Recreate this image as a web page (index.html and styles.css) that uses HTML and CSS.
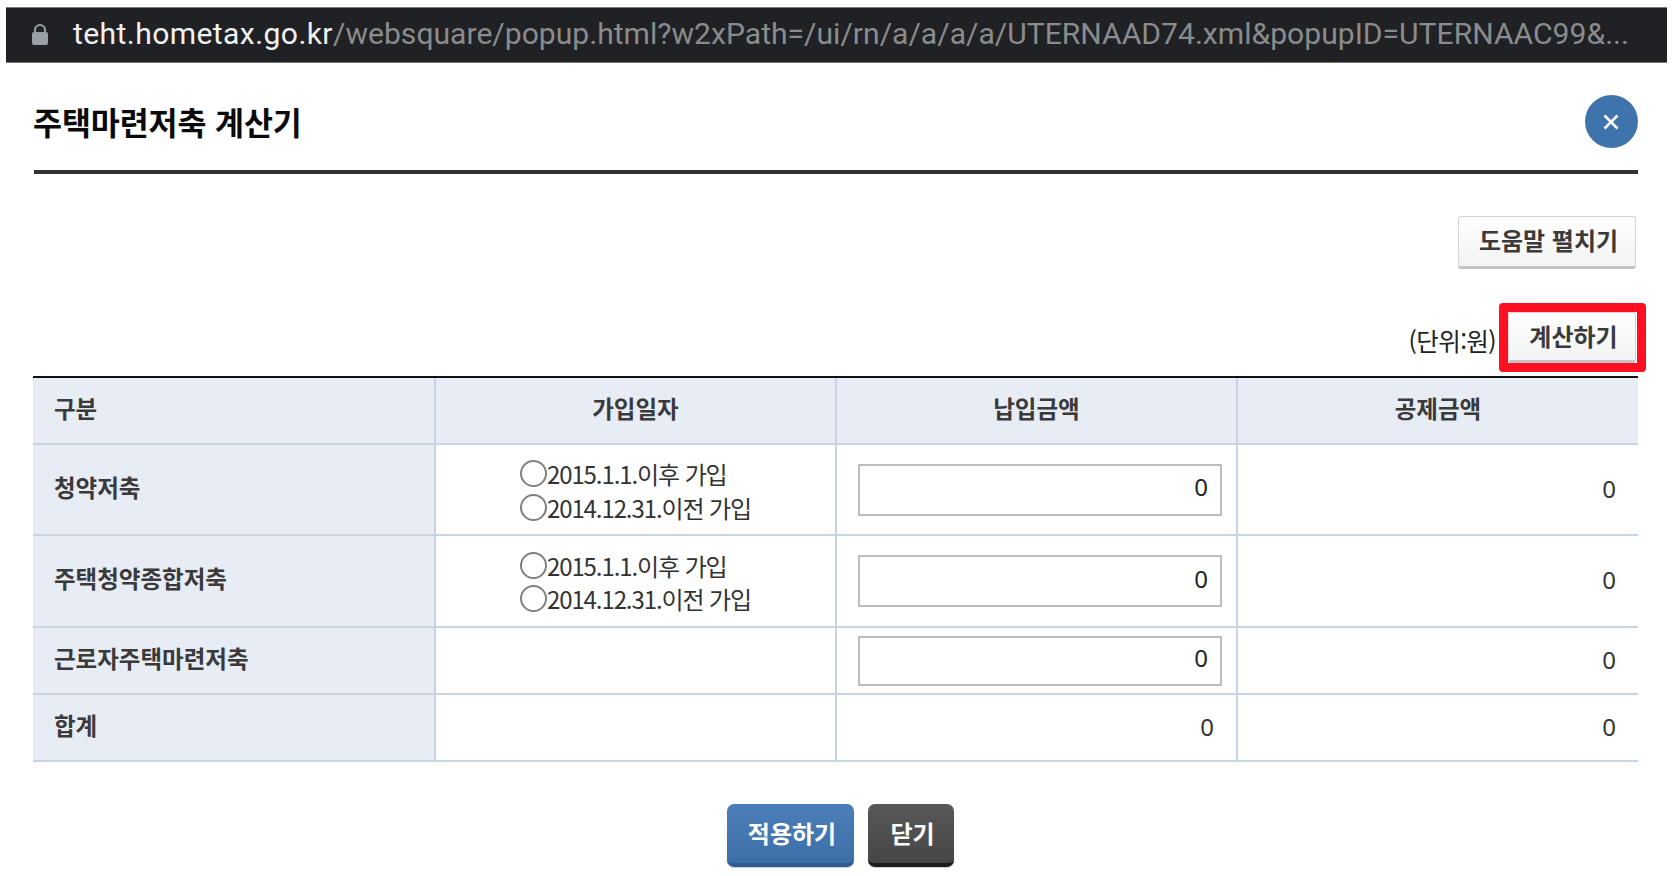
FILE: index.html
```html
<!DOCTYPE html>
<html lang="ko">
<head>
<meta charset="utf-8">
<title>주택마련저축 계산기</title>
<link rel="stylesheet" href="styles.css">
</head>
<body>
<div class="urlbar">
  <svg class="lock" viewBox="0 0 16 21" aria-hidden="true"><path d="M2 8V6a6 6 0 0 1 12 0v2h-2V6a4 4 0 0 0-8 0v2z"/><rect x="0" y="8" width="16" height="13" rx="2"/></svg>
  <span class="url"><span class="host">teht.hometax.go.kr</span>/websquare/popup.html?w2xPath=/ui/rn/a/a/a/a/UTERNAAD74.xml&amp;popupID=UTERNAAC99&amp;...</span>
</div>
<main class="page">
  <header class="head">
    <h1 class="title">주택마련저축 계산기</h1>
    <button class="close-round" aria-label="닫기"><svg viewBox="0 0 18 18"><path d="M2.5 2.5l13 13M15.5 2.5l-13 13"/></svg></button>
  </header>
  <div class="help-row"><button class="btn btn-help">도움말 펼치기</button></div>
  <div class="unit-row"><span class="unit">(단위:원)</span><span class="highlight"><button class="btn btn-calc">계산하기</button></span></div>
  <table class="calc">
    <colgroup><col class="c1"><col class="c2"><col class="c3"><col class="c4"></colgroup>
    <thead>
      <tr class="r-short"><th class="left">구분</th><th>가입일자</th><th>납입금액</th><th>공제금액</th></tr>
    </thead>
    <tbody>
      <tr class="r-tall1">
        <th class="left">청약저축</th>
        <td class="center"><div class="radios">
          <label class="radio"><input type="radio" name="a">2015.1.1.이후 가입</label>
          <label class="radio"><input type="radio" name="a">2014.12.31.이전 가입</label>
        </div></td>
        <td class="cell-input"><input class="amount" value="0"></td>
        <td class="num">0</td>
      </tr>
      <tr class="r-tall2">
        <th class="left">주택청약종합저축</th>
        <td class="center"><div class="radios">
          <label class="radio"><input type="radio" name="b">2015.1.1.이후 가입</label>
          <label class="radio"><input type="radio" name="b">2014.12.31.이전 가입</label>
        </div></td>
        <td class="cell-input"><input class="amount" value="0"></td>
        <td class="num">0</td>
      </tr>
      <tr class="r-short">
        <th class="left">근로자주택마련저축</th>
        <td></td>
        <td class="cell-input"><input class="amount amount-low" value="0"></td>
        <td class="num">0</td>
      </tr>
      <tr class="r-short">
        <th class="left">합계</th>
        <td></td>
        <td class="num">0</td>
        <td class="num">0</td>
      </tr>
    </tbody>
  </table>
  <div class="actions">
    <button class="act act-apply">적용하기</button>
    <button class="act act-close">닫기</button>
  </div>
</main>
</body>
</html>
```

FILE: styles.css
```css
* { box-sizing: border-box; }
html, body { margin: 0; padding: 0; background: #fff; overflow: hidden; }
body { font-family: "Noto Sans CJK KR", "Noto Sans", sans-serif; color: #333; height: 876px; padding-top: 7px; }

.urlbar {
  margin: 0 5px 0 6px; height: 56px; background: #202124;
  border-top: 1px solid #777; border-bottom: 1px solid #777;
  display: flex; align-items: center; padding-left: 26px;
}
.lock { width: 16px; height: 21px; fill: #9aa0a6; flex: none; margin-top: -1px; }
.url { margin: 0 0 4px 25px; font-family: Roboto, "Liberation Sans", sans-serif; font-size: 30.1px; color: #8a8b8d; white-space: nowrap; }
.host { color: #f0f1f2; letter-spacing: 0.4px; }

.page { padding: 0 36px 0 33px; }
.head { height: 111px; margin: 0 -2px 0 1px; border-bottom: 4px solid #333; display: flex; justify-content: space-between; align-items: center; padding-top: 10px; }
.title { margin: 0 0 0 -1px; font-size: 31.5px; font-weight: 700; color: #0a0a0a; letter-spacing: -0.1px; line-height: 1; }
.close-round { width: 53px; height: 53px; padding: 0; border: 0; border-radius: 50%; background: #3f73ab; display: flex; align-items: center; justify-content: center; }
.close-round svg { width: 18px; height: 18px; margin-right: 1px; fill: none; stroke: #fff; stroke-width: 2.6; }

.help-row { display: flex; justify-content: flex-end; margin-top: 42px; }
.unit-row { display: flex; justify-content: flex-end; align-items: center; gap: 12px; margin-top: 43px; margin-bottom: 13px; }
.unit { font-size: 24.5px; color: #222; letter-spacing: -0.6px; margin-top: 5px; }
.btn {
  display: block; font-family: inherit; font-size: 24px; font-weight: 700; color: #3a3a3a;
  border: 1px solid #d4d4d4; border-bottom: 3px solid #c4c4c4; border-radius: 3px;
  background: linear-gradient(#ffffff, #f3f3f3); padding: 0 0 4px 3px;
}
.btn-help { width: 178px; height: 53px; }
.btn-calc { width: 128px; height: 51px; padding-bottom: 3px; }
.highlight { display: block; border: 9px solid #ff0f20; border-radius: 4px; margin: -9px -10px -9px -9px; padding-right: 1px; background: #fff; }

.calc { width: 1605px; table-layout: fixed; border-collapse: separate; border-spacing: 0; border-top: 2px solid #111; }
.c1 { width: 403px; } .c2 { width: 401px; } .c3 { width: 401px; } .c4 { width: 400px; }
.calc th, .calc td { border-bottom: 2px solid #c9d4e2; border-right: 2px solid #c9d4e2; padding: 0; vertical-align: middle; }
.calc tr > :last-child { border-right: 0; }
.calc th { background: #e8ecf5; font-size: 23.5px; font-weight: 700; color: #3a3a3a; }
.calc th.left { text-align: left; padding: 0 0 6px 21px; }
.calc thead th { padding-bottom: 6px; }
.r-short { height: 67px; }
.r-tall1 { height: 91px; }
.r-tall2 { height: 92px; }
.calc td.center { text-align: center; padding: 2px 0 0; }
.radios { display: inline-flex; flex-direction: column; align-items: flex-start; }
.radio { display: flex; align-items: center; height: 33.5px; font-size: 24px; color: #333; letter-spacing: -1.1px; white-space: nowrap; }
.radio input { appearance: none; margin: 0; width: 27px; height: 27px; border: 2px solid #808080; border-radius: 50%; background: #fff; flex: none; }
.calc td.cell-input { padding: 0 0 0 21px; }
.amount { display: block; width: 364px; height: 52px; border: 2px solid #bdbdbd; padding: 0 12px 6px; text-align: right; font-family: "Noto Sans", sans-serif; font-size: 24px; color: #222; background: #fff; }
.amount-low { height: 50px; }
.calc td.num { text-align: right; padding: 0 22px 3px 0; font-family: "Noto Sans", sans-serif; font-size: 24px; color: #333; }

.actions { display: flex; justify-content: center; gap: 14px; margin-top: 42px; padding-left: 12px; }
.act { height: 63px; border: 0; border-radius: 7px; font-family: inherit; font-size: 24px; font-weight: 700; color: #fff; padding: 0 0 2px 3px; box-shadow: 0 1px 1px rgba(0,0,0,.2); }
.act-apply { width: 127px; background: linear-gradient(#4c7fb9, #3d6ea8); border-bottom: 4px solid #2f5c92; }
.act-close { width: 86px; background: linear-gradient(#585858, #464646); border-bottom: 4px solid #1c1c1c; }
```
